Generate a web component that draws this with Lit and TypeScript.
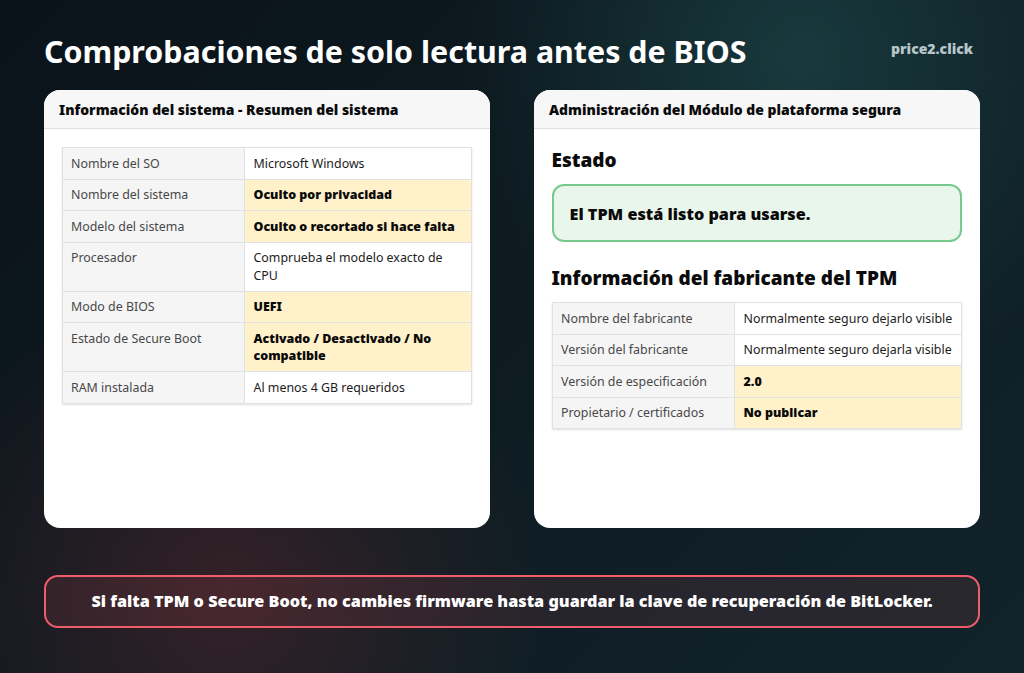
import { LitElement, html, css } from "lit";
import { customElement } from "lit/decorators.js";

type Row = [string, string, boolean?];

const sys: Row[] = [
  ["Nombre del SO", "Microsoft Windows"],
  ["Nombre del sistema", "Oculto por privacidad", true],
  ["Modelo del sistema", "Oculto o recortado si hace falta", true],
  ["Procesador", "Comprueba el modelo exacto de CPU"],
  ["Modo de BIOS", "UEFI", true],
  ["Estado de Secure Boot", "Activado / Desactivado / No compatible", true],
  ["RAM instalada", "Al menos 4 GB requeridos"],
];
const tpm: Row[] = [
  ["Nombre del fabricante", "Normalmente seguro dejarlo visible"],
  ["Versión del fabricante", "Normalmente seguro dejarla visible"],
  ["Versión de especificación", "2.0", true],
  ["Propietario / certificados", "No publicar", true],
];

@customElement("app-root")
export class AppRoot extends LitElement {
  static styles = css`
    :host {
      display: block;
      width: 1024px;
      height: 673px;
      overflow: hidden;
      box-sizing: border-box;
      padding: 30px 44px 0;
      font-family: "Noto Sans", "Open Sans", sans-serif;
      color: #111;
      background:
        radial-gradient(circle at 78% 8%, rgba(32, 82, 84, 0.55), rgba(32, 82, 84, 0) 34%),
        radial-gradient(circle at 22% 88%, rgba(105, 42, 48, 0.42), rgba(105, 42, 48, 0) 32%),
        linear-gradient(135deg, #0a1319, #11232a);
    }
    .top {
      display: flex;
      justify-content: space-between;
      align-items: flex-start;
      height: 60px;
    }
    h1 {
      margin: 0;
      font-size: 30.4px;
      line-height: 44px;
      font-weight: 700;
      color: #fff;
    }
    .brand {
      font-size: 14px;
      font-weight: 900;
      line-height: 18px;
      margin-top: 10px;
      margin-right: 7px;
      color: #b9c6c9;
    }
    .cols {
      display: grid;
      grid-template-columns: 446px 446px;
      gap: 44px;
      height: 438px;
    }
    .card {
      background: #fff;
      border-radius: 16px;
      overflow: hidden;
    }
    .head {
      height: 38px;
      box-sizing: content-box;
      padding: 0 15px;
      background: #f7f7f8;
      border-bottom: 1px solid #dedfe1;
      font-size: 13.95px;
      font-weight: 900;
      line-height: 39px;
      color: #0b0b0b;
      white-space: nowrap;
    }
    .body {
      padding: 18px 18px 18px 17.5px;
    }
    table {
      width: 100%;
      border-collapse: collapse;
      table-layout: fixed;
      font-size: 12.4px;
      line-height: 17.5px;
      box-shadow: 0 1px 2px rgba(0, 0, 0, 0.12);
    }
    td {
      border: 1px solid #dfe1e3;
      padding: 6.5px 3px 6.5px 8.5px;
      vertical-align: top;
      color: #1c1c1c;
    }
    td.k {
      box-sizing: border-box;
      width: 182.5px;
      background: #f5f5f6;
      color: #484848;
    }
    td.warn {
      background: #fff1c9;
      font-weight: 900;
      font-size: 12.45px;
      color: #0a0a0a;
    }
    h2 {
      margin: 0;
      font-size: 19px;
      line-height: 26px;
      font-weight: 900;
      color: #0b0b0b;
    }
    .ok {
      margin: 11px 0 23px;
      height: 54px;
      border: 2px solid #78c98c;
      border-radius: 12px;
      background: #e9f6ec;
      padding: 0 16px;
      font-size: 16.2px;
      font-weight: 900;
      line-height: 56px;
      color: #0a0a0a;
    }
    .tpm h2 {
      margin-bottom: 11px;
    }
    .banner {
      margin-top: 46.5px;
      height: 49px;
      border: 2px solid #ef5d6b;
      border-radius: 14px;
      background: rgba(255, 100, 108, 0.1);
      display: flex;
      align-items: center;
      justify-content: center;
      color: #fff;
      font-size: 16.2px;
      font-weight: 900;
      white-space: nowrap;
    }
  `;

  private table(rows: Row[]) {
    return html`<table>
      ${rows.map(
        ([k, v, w]) => html`<tr>
          <td class="k">${k}</td>
          <td class=${w ? "warn" : ""}>${v}</td>
        </tr>`
      )}
    </table>`;
  }

  render() {
    return html`
      <div class="top">
        <h1>Comprobaciones de solo lectura antes de BIOS</h1>
        <div class="brand">price2.click</div>
      </div>
      <div class="cols">
        <section class="card">
          <div class="head">Información del sistema - Resumen del sistema</div>
          <div class="body">${this.table(sys)}</div>
        </section>
        <section class="card">
          <div class="head">Administración del Módulo de plataforma segura</div>
          <div class="body tpm">
            <h2>Estado</h2>
            <div class="ok">El TPM está listo para usarse.</div>
            <h2>Información del fabricante del TPM</h2>
            ${this.table(tpm)}
          </div>
        </section>
      </div>
      <div class="banner">Si falta TPM o Secure Boot, no cambies firmware hasta guardar la clave de recuperación de BitLocker.</div>
    `;
  }
}
